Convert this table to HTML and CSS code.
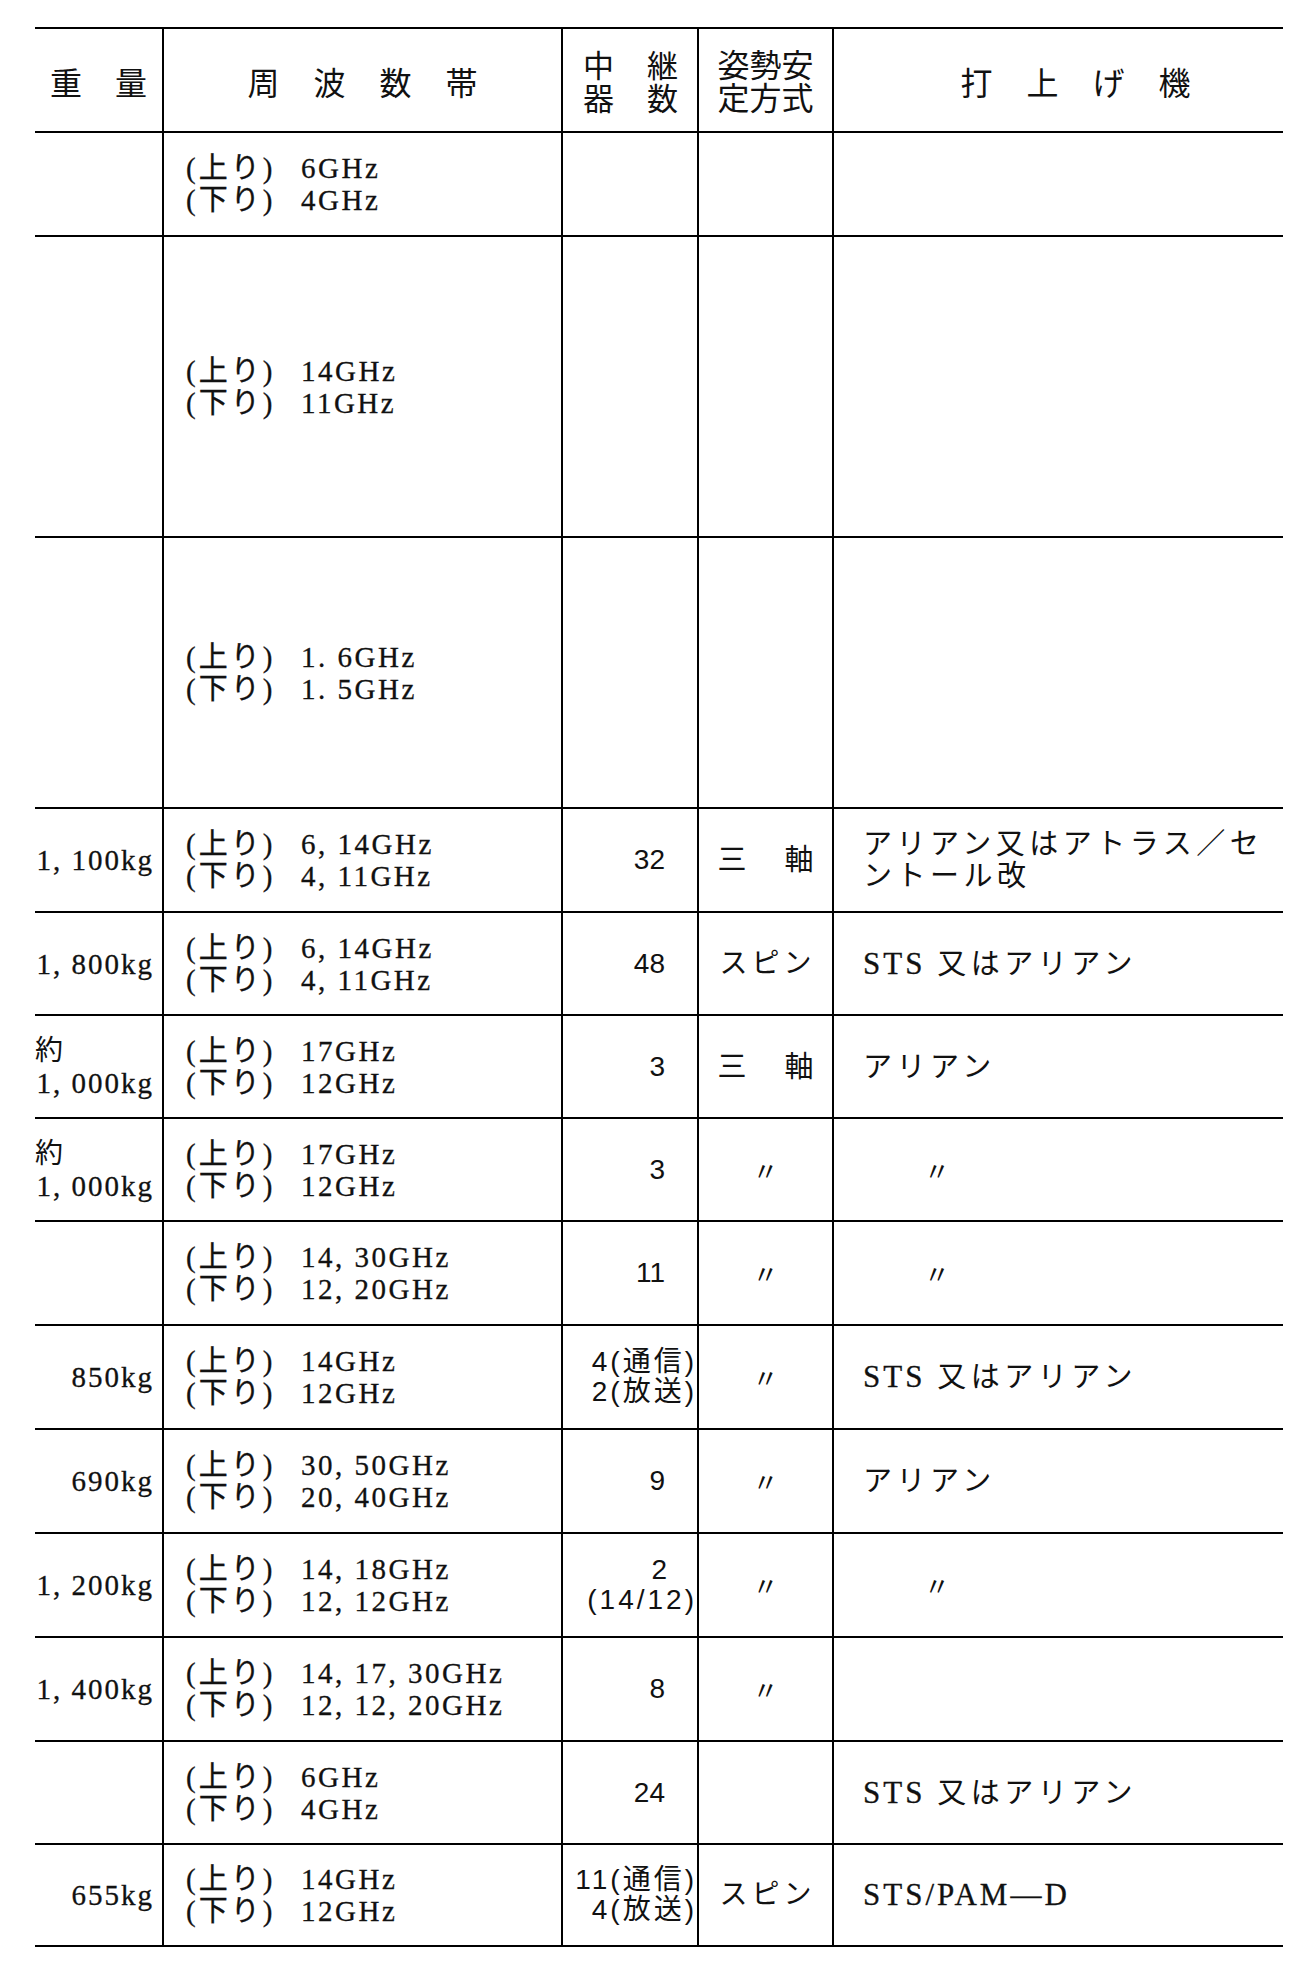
FILE: index.html
```html
<!DOCTYPE html>
<html lang="ja">
<head>
<meta charset="utf-8">
<title>通信衛星の諸元</title>
<link rel="stylesheet" href="styles.css">
</head>
<body>
<div class="sheet">
  <!-- header -->
  <div class="cell h c1"><div class="spread g33"><span>重</span><span>量</span></div></div>
  <div class="cell h c2"><div class="spread g34"><span>周</span><span>波</span><span>数</span><span>帯</span></div></div>
  <div class="cell h c3"><div class="pair"><span>中</span><span>継</span></div><div class="pair"><span>器</span><span>数</span></div></div>
  <div class="cell h c4"><div>姿勢安</div><div>定方式</div></div>
  <div class="cell h c5"><div class="spread g34 launch-head"><span>打</span><span>上</span><span>げ</span><span>機</span></div></div>

  <!-- row 1 -->
  <div class="cell c1 w"></div>
  <div class="cell c2 f"><div class="fl"><span class="lab">(上り)</span><span class="val">6GHz</span></div><div class="fl"><span class="lab">(下り)</span><span class="val">4GHz</span></div></div>
  <div class="cell c3 n"></div>
  <div class="cell c4 s"></div>
  <div class="cell c5 l"></div>

  <!-- row 2 -->
  <div class="cell c1 w"></div>
  <div class="cell c2 f"><div class="fl"><span class="lab">(上り)</span><span class="val">14GHz</span></div><div class="fl"><span class="lab">(下り)</span><span class="val">11GHz</span></div></div>
  <div class="cell c3 n"></div>
  <div class="cell c4 s"></div>
  <div class="cell c5 l"></div>

  <!-- row 3 -->
  <div class="cell c1 w"></div>
  <div class="cell c2 f"><div class="fl"><span class="lab">(上り)</span><span class="val">1. 6GHz</span></div><div class="fl"><span class="lab">(下り)</span><span class="val">1. 5GHz</span></div></div>
  <div class="cell c3 n"></div>
  <div class="cell c4 s"></div>
  <div class="cell c5 l"></div>

  <!-- row 4 -->
  <div class="cell c1 w"><div>1, 100kg</div></div>
  <div class="cell c2 f"><div class="fl"><span class="lab">(上り)</span><span class="val">6, 14GHz</span></div><div class="fl"><span class="lab">(下り)</span><span class="val">4, 11GHz</span></div></div>
  <div class="cell c3 n"><div>32</div></div>
  <div class="cell c4 s"><div class="axis"><span>三</span><span>軸</span></div></div>
  <div class="cell c5 l"><div>アリアン又はアトラス／セ</div><div>ントール改</div></div>

  <!-- row 5 -->
  <div class="cell c1 w"><div>1, 800kg</div></div>
  <div class="cell c2 f"><div class="fl"><span class="lab">(上り)</span><span class="val">6, 14GHz</span></div><div class="fl"><span class="lab">(下り)</span><span class="val">4, 11GHz</span></div></div>
  <div class="cell c3 n"><div>48</div></div>
  <div class="cell c4 s"><div class="spin">スピン</div></div>
  <div class="cell c5 l"><div><span class="lat">STS</span> 又はアリアン</div></div>

  <!-- row 6 -->
  <div class="cell c1 w"><div class="yaku">約</div><div>1, 000kg</div></div>
  <div class="cell c2 f"><div class="fl"><span class="lab">(上り)</span><span class="val">17GHz</span></div><div class="fl"><span class="lab">(下り)</span><span class="val">12GHz</span></div></div>
  <div class="cell c3 n"><div>3</div></div>
  <div class="cell c4 s"><div class="axis"><span>三</span><span>軸</span></div></div>
  <div class="cell c5 l"><div>アリアン</div></div>

  <!-- row 7 -->
  <div class="cell c1 w"><div class="yaku">約</div><div>1, 000kg</div></div>
  <div class="cell c2 f"><div class="fl"><span class="lab">(上り)</span><span class="val">17GHz</span></div><div class="fl"><span class="lab">(下り)</span><span class="val">12GHz</span></div></div>
  <div class="cell c3 n"><div>3</div></div>
  <div class="cell c4 s"><div class="dit">〃</div></div>
  <div class="cell c5 l"><div class="dit">〃</div></div>

  <!-- row 8 -->
  <div class="cell c1 w"></div>
  <div class="cell c2 f"><div class="fl"><span class="lab">(上り)</span><span class="val">14, 30GHz</span></div><div class="fl"><span class="lab">(下り)</span><span class="val">12, 20GHz</span></div></div>
  <div class="cell c3 n"><div>11</div></div>
  <div class="cell c4 s"><div class="dit">〃</div></div>
  <div class="cell c5 l"><div class="dit">〃</div></div>

  <!-- row 9 -->
  <div class="cell c1 w"><div>850kg</div></div>
  <div class="cell c2 f"><div class="fl"><span class="lab">(上り)</span><span class="val">14GHz</span></div><div class="fl"><span class="lab">(下り)</span><span class="val">12GHz</span></div></div>
  <div class="cell c3 n multi"><div>4(通信)</div><div>2(放送)</div></div>
  <div class="cell c4 s"><div class="dit">〃</div></div>
  <div class="cell c5 l"><div><span class="lat">STS</span> 又はアリアン</div></div>

  <!-- row 10 -->
  <div class="cell c1 w"><div>690kg</div></div>
  <div class="cell c2 f"><div class="fl"><span class="lab">(上り)</span><span class="val">30, 50GHz</span></div><div class="fl"><span class="lab">(下り)</span><span class="val">20, 40GHz</span></div></div>
  <div class="cell c3 n"><div>9</div></div>
  <div class="cell c4 s"><div class="dit">〃</div></div>
  <div class="cell c5 l"><div>アリアン</div></div>

  <!-- row 11 -->
  <div class="cell c1 w"><div>1, 200kg</div></div>
  <div class="cell c2 f"><div class="fl"><span class="lab">(上り)</span><span class="val">14, 18GHz</span></div><div class="fl"><span class="lab">(下り)</span><span class="val">12, 12GHz</span></div></div>
  <div class="cell c3 n multi"><div class="inset">2</div><div class="ratio">(14/12)</div></div>
  <div class="cell c4 s"><div class="dit">〃</div></div>
  <div class="cell c5 l"><div class="dit">〃</div></div>

  <!-- row 12 -->
  <div class="cell c1 w"><div>1, 400kg</div></div>
  <div class="cell c2 f"><div class="fl"><span class="lab">(上り)</span><span class="val">14, 17, 30GHz</span></div><div class="fl"><span class="lab">(下り)</span><span class="val">12, 12, 20GHz</span></div></div>
  <div class="cell c3 n"><div>8</div></div>
  <div class="cell c4 s"><div class="dit">〃</div></div>
  <div class="cell c5 l"></div>

  <!-- row 13 -->
  <div class="cell c1 w"></div>
  <div class="cell c2 f"><div class="fl"><span class="lab">(上り)</span><span class="val">6GHz</span></div><div class="fl"><span class="lab">(下り)</span><span class="val">4GHz</span></div></div>
  <div class="cell c3 n"><div>24</div></div>
  <div class="cell c4 s"></div>
  <div class="cell c5 l"><div><span class="lat">STS</span> 又はアリアン</div></div>

  <!-- row 14 -->
  <div class="cell c1 w"><div>655kg</div></div>
  <div class="cell c2 f"><div class="fl"><span class="lab">(上り)</span><span class="val">14GHz</span></div><div class="fl"><span class="lab">(下り)</span><span class="val">12GHz</span></div></div>
  <div class="cell c3 n multi"><div>11(通信)</div><div>4(放送)</div></div>
  <div class="cell c4 s"><div class="spin">スピン</div></div>
  <div class="cell c5 l"><div class="lat">STS/PAM—D</div></div>
</div>
</body>
</html>
```

FILE: styles.css
```css
html, body {
  margin: 0;
  padding: 0;
  background: #ffffff;
}

body {
  width: 1313px;
  min-height: 1973px;
  color: #111111;
  font-family: "Liberation Serif", "Noto Sans CJK JP", serif;
  -webkit-text-stroke: 0.3px #111111;
}

.sheet {
  margin: 27px 0 0 35px;
  width: 1248px;
  display: grid;
  grid-template-columns: 127px 399px 136px 135px 451px;
  grid-template-rows: 104px 104px 301px 271px 104px 103px 103px 103px 104px 104px 104px 104px 104px 103px 102px;
  border-top: 2px solid #000;
}

.cell {
  box-sizing: border-box;
  border-bottom: 2px solid #000;
  display: flex;
  flex-direction: column;
  justify-content: center;
  min-width: 0;
  font-size: 29px;
  line-height: 32px;
  white-space: nowrap;
}

.c2, .c3, .c4, .c5 {
  border-left: 2px solid #000;
}

/* header */
.h {
  font-family: "Liberation Serif", "Noto Sans CJK JP", serif;
  font-size: 32px;
  line-height: 34px;
  align-items: center;
  padding-top: 8px;
  -webkit-text-stroke: 0;
}

.spread {
  display: flex;
}

.g33 { gap: 33px; }
.g34 { gap: 34px; }

.launch-head {
  margin-left: 34px;
}

.h.c3 {
  align-items: stretch;
  padding: 6px 19px 0 20px;
}

.pair {
  display: flex;
  justify-content: space-between;
  font-size: 31px;
  line-height: 33px;
}

.h.c4 {
  line-height: 33px;
  padding-top: 6px;
}

/* weight column */
.w {
  align-items: flex-end;
  padding-right: 8px;
  letter-spacing: 2px;
}

.w .yaku {
  align-self: flex-start;
  font-size: 28px;
  letter-spacing: 0;
  -webkit-text-stroke: 0;
}

/* frequency column */
.f {
  padding-left: 22px;
}

.fl {
  display: flex;
}

.lab {
  flex: none;
  width: 115px;
  letter-spacing: 3px;
}

.val {
  letter-spacing: 2.5px;
}

/* transponder count column */
.n {
  align-items: flex-end;
  padding-right: 32px;
  font-family: "Liberation Sans", "Noto Sans CJK JP", sans-serif;
  font-size: 28px;
  -webkit-text-stroke: 0;
}

.n.multi {
  padding-right: 0;
  font-size: 28px;
  line-height: 30px;
  letter-spacing: 3px;
}

.n.multi .inset {
  margin-right: 30px;
  letter-spacing: 0;
}

.n.multi .ratio {
  letter-spacing: 3px;
}

/* stabilisation column */
.s {
  align-items: center;
  -webkit-text-stroke: 0;
}

.axis {
  display: flex;
  gap: 38px;
}

.spin {
  font-size: 28px;
  letter-spacing: 4px;
  padding-left: 4px;
}

.dit {
  font-family: "Noto Sans CJK JP", sans-serif;
  font-size: 26px;
}

/* launcher column */
.l {
  padding-left: 29px;
  letter-spacing: 4.5px;
  -webkit-text-stroke: 0;
}

.l .dit {
  margin-left: 61px;
}

.lat {
  font-size: 31px;
  letter-spacing: 3px;
  -webkit-text-stroke: 0.3px #111111;
}
```
